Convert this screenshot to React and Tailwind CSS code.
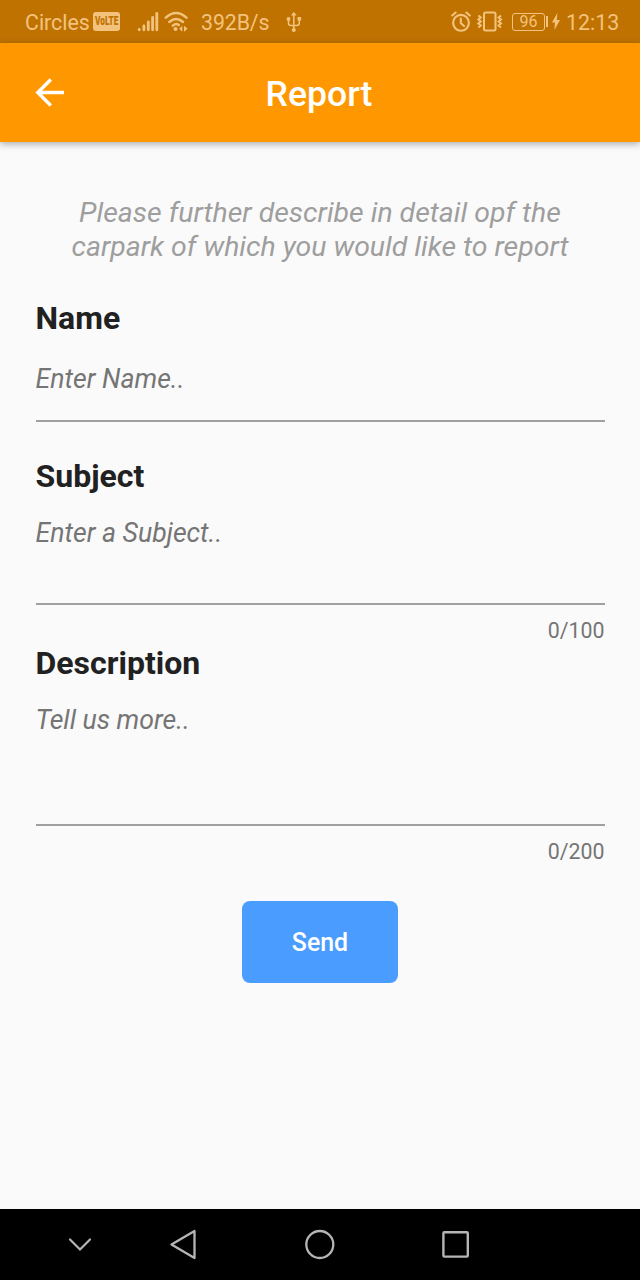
const label = "block h-[38px] text-[32px] leading-[38px] font-bold text-[#212121]";
const field =
  "block w-full resize-none overflow-hidden border-b-2 border-[#a0a0a0] bg-transparent p-0 text-[26.67px] leading-[32px] italic text-[#757575] outline-none placeholder:text-[#757575] placeholder:opacity-100";
const counter = "text-right text-[21.33px] leading-[26px] text-[#757575]";

function StatusBar() {
  return (
    <div className="flex h-[43px] shrink-0 items-center bg-[#bf7200] text-[#f3c37e]">
      <span className="ml-[25px] w-[68px] whitespace-nowrap pt-[2px] text-[21.33px] leading-[26px]">Circles</span>
      <span className="flex h-[19px] w-[27px] items-center justify-center rounded-[3px] bg-[#f3c37e] text-[#bf7200]">
        <span className="scale-x-[0.66] text-[12.5px] leading-none font-black">VoLTE</span>
      </span>
      <svg className="ml-[17px]" width="23" height="22" viewBox="0 0 23 22" fill="none" stroke="currentColor" strokeWidth="2.8" strokeLinecap="round">
        <path d="M2.2 18.5v.3M6.9 15v3.8M11.3 11v7.8M15.6 6.5v12.3M19.8 2.3v16.5" />
      </svg>
      <svg className="ml-[4px]" width="26" height="24" viewBox="0 0 26 24" fill="none" stroke="currentColor" strokeWidth="2.4" strokeLinecap="round">
        <path d="M1.8 7.7Q12-1.5 22.5 7.7M5.3 12Q12 5.8 19 12M8.8 15.7Q12 12.8 14.8 15" />
        <circle cx="11.5" cy="19" r="2" fill="currentColor" stroke="none" />
        <path d="M15.2 18.8l3.1-3.1v6zM23.6 18.8l-3.6-3v6z" fill="currentColor" stroke="none" />
      </svg>
      <span className="ml-[11px] w-[70px] whitespace-nowrap pt-[2px] text-[21.33px] leading-[26px] tracking-[-0.1px]">392B/s</span>
      <svg className="ml-[14px]" width="18" height="22" viewBox="0 0 18 22" fill="none" stroke="currentColor" strokeWidth="1.5">
        <path d="M8.8 3v16M3.5 8v4.5Q3.5 14.5 6 14.5h5.8q2.5 0 2.5-2.5V8" />
        <path d="M8.8.8l2.8 3.8H6zM12.5 6h3.6v3.6h-3.6z" fill="currentColor" stroke="none" />
        <circle cx="3.5" cy="8" r="1.9" fill="currentColor" stroke="none" />
        <circle cx="8.8" cy="19" r="2" fill="currentColor" stroke="none" />
      </svg>
      <div className="ml-auto flex items-center pr-[21px]">
        <svg width="20" height="21" viewBox="0 0 20 21" fill="none" stroke="currentColor" strokeWidth="2.1" strokeLinecap="round">
          <circle cx="10" cy="11.8" r="7.9" />
          <path d="M1.2 4.5L4.6 1.5M15.4 1.5L18.8 4.5M9.8 7.5v4.5l3.2 3" />
        </svg>
        <svg className="ml-[6px]" width="26" height="21" viewBox="0 0 26 21" fill="none" stroke="currentColor" strokeWidth="2">
          <rect x="7" y="1.5" width="11.5" height="18" rx="1.5" />
          <path d="M1.4 4.5l2.4 2-2.4 2 2.4 2-2.4 2 2.4 2-2.4 2M24 4.5l-2.4 2 2.4 2-2.4 2 2.4 2-2.4 2 2.4 2" strokeWidth="2" />
        </svg>
        <span className="ml-[9px] flex h-[18px] w-[33px] items-center justify-center rounded-[3px] border border-[#f3c37e] pt-px text-[16px] leading-none">96</span>
        <span className="ml-[1px] h-[11px] w-[2px] bg-[#f3c37e]" />
        <svg className="ml-[4px]" width="8" height="17" viewBox="0 0 8 17" fill="currentColor">
          <path d="M5.4 0L0 9.6h3L2.4 17l5.6-10H4.8z" />
        </svg>
        <span className="ml-[6px] w-[53px] whitespace-nowrap pt-[2px] text-[21.33px] leading-[26px]">12:13</span>
      </div>
    </div>
  );
}

function AppBar() {
  return (
    <header className="z-10 grid h-[99px] shrink-0 grid-cols-[100px_1fr_100px] items-center bg-[#ff9800] text-white shadow-[0_2px_7px_rgba(0,0,0,0.32)]">
      <button aria-label="Back" className="ml-[35px] w-[30px]">
        <svg width="30" height="30" viewBox="0 0 30 30" fill="none" stroke="currentColor" strokeWidth="3.4">
          <path d="M29 14.5H3.5M15.8 1.5L2.8 14.5l13 13" />
        </svg>
      </button>
      <h1 className="pt-[2px] pr-[2px] text-center text-[35.56px] leading-[42px] font-medium">Report</h1>
    </header>
  );
}

function NavBar() {
  return (
    <nav className="flex h-[71px] shrink-0 items-center bg-black text-[#b5b5b5]">
      <svg className="ml-[67px]" width="26" height="30" viewBox="0 0 26 30" fill="none" stroke="currentColor" strokeWidth="2.2" strokeLinecap="round">
        <path d="M3 9.5l10 10 10-10" />
      </svg>
      <svg className="ml-[76px]" width="30" height="32" viewBox="0 0 30 32" fill="none" stroke="currentColor" strokeWidth="2.3" strokeLinejoin="round">
        <path d="M25.5 2v27L2.5 15.5z" />
      </svg>
      <svg className="ml-[105px]" width="32" height="32" viewBox="0 0 32 32" fill="none" stroke="currentColor" strokeWidth="2.3">
        <circle cx="15.8" cy="15.5" r="13.5" />
      </svg>
      <svg className="ml-[105px]" width="30" height="30" viewBox="0 0 30 30" fill="none" stroke="currentColor" strokeWidth="2.4">
        <rect x="2.4" y="2.2" width="24.4" height="24.4" rx="1" />
      </svg>
    </nav>
  );
}

export default function App() {
  return (
    <div className="flex h-[1280px] w-[640px] flex-col bg-[#fafafa] font-['Roboto',sans-serif]">
      <StatusBar />
      <AppBar />
      <main className="flex flex-1 flex-col px-[35.5px] pt-[54px]">
        <p className="text-center text-[28.44px] leading-[34px] text-[#9e9e9e] italic">
          Please further describe in detail opf the
          <br />
          carpark of which you would like to report
        </p>
        <label htmlFor="name" className={`${label} mt-[35px]`}>Name</label>
        <input id="name" placeholder="Enter Name.." className={`${field} mt-[26px] h-[59px] pb-[25px]`} />
        <label htmlFor="subject" className={`${label} mt-[35px]`}>Subject</label>
        <textarea id="subject" placeholder="Enter a Subject.." className={`${field} mt-[22px] h-[88px]`} />
        <div className={`${counter} mt-[13px]`}>0/100</div>
        <label htmlFor="description" className={label}>Description</label>
        <textarea id="description" placeholder="Tell us more.." className={`${field} mt-[22px] h-[122px]`} />
        <div className={`${counter} mt-[13px]`}>0/200</div>
        <button className="mt-[36px] h-[82px] w-[156px] self-center rounded-[8px] bg-[#4a9cff] pt-[2px] text-[24.9px] font-medium text-white">
          Send
        </button>
      </main>
      <NavBar />
    </div>
  );
}
